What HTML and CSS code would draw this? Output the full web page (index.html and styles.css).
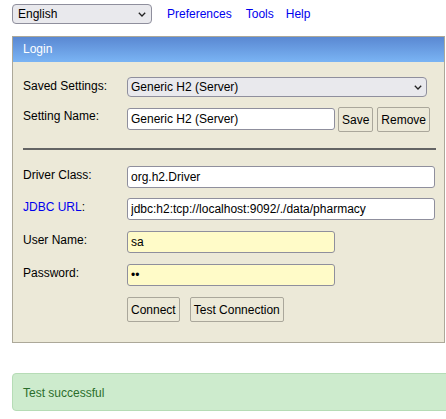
FILE: index.html
```html
<!DOCTYPE html>
<html lang="en">
<head>
<meta charset="utf-8">
<title>H2 Console</title>
<link rel="stylesheet" href="styles.css">
</head>
<body>
<div class="topbar">
  <span class="sel sel-lang">
    <select class="select select-lang"><option>English</option></select>
    <svg class="chev" width="8" height="5" viewBox="0 0 8 5"><path d="M0.8 0.8 L4 4 L7.2 0.8" fill="none" stroke="#222" stroke-width="1.3"/></svg>
  </span>
  <a class="nav-link nav-pref" href="#">Preferences</a>
  <a class="nav-link nav-tools" href="#">Tools</a>
  <a class="nav-link nav-help" href="#">Help</a>
</div>

<div class="panel">
  <div class="panel-head">Login</div>
  <div class="panel-body">
    <div class="row row-saved">
      <span class="lbl">Saved Settings:</span>
      <span class="sel sel-saved">
        <select class="select select-saved"><option>Generic H2 (Server)</option></select>
        <svg class="chev" width="8" height="5" viewBox="0 0 8 5"><path d="M0.8 0.8 L4 4 L7.2 0.8" fill="none" stroke="#222" stroke-width="1.3"/></svg>
      </span>
    </div>
    <div class="row row-name">
      <span class="lbl">Setting Name:</span>
      <div class="ctrl-line">
        <input class="field field-short field-name" type="text" value="Generic H2 (Server)">
        <button class="btn btn-save">Save</button>
        <button class="btn btn-remove">Remove</button>
      </div>
    </div>
    <div class="sep"></div>
    <div class="row row-driver">
      <span class="lbl">Driver Class:</span>
      <input class="field field-long" type="text" value="org.h2.Driver">
    </div>
    <div class="row row-url">
      <span class="lbl"><a class="help-link" href="#">JDBC URL</a>:</span>
      <input class="field field-long" type="text" value="jdbc:h2:tcp://localhost:9092/./data/pharmacy">
    </div>
    <div class="row row-user">
      <span class="lbl">User Name:</span>
      <input class="field field-short field-yellow" type="text" value="sa">
    </div>
    <div class="row row-pass">
      <span class="lbl">Password:</span>
      <input class="field field-short field-yellow" type="password" value="sa">
    </div>
    <div class="row row-actions">
      <span class="lbl"></span>
      <div class="ctrl-line actions">
        <button class="btn btn-connect">Connect</button>
        <button class="btn btn-test">Test Connection</button>
      </div>
    </div>
  </div>
</div>

<div class="alert">Test successful</div>
</body>
</html>
```
FILE: styles.css
```css
html, body {
  margin: 0;
  padding: 0;
  background: #ffffff;
  overflow: hidden;
}
body {
  font-family: "Liberation Sans", Arial, sans-serif;
  font-size: 12px;
  line-height: 14px;
  color: #000;
}

.topbar {
  display: flex;
  align-items: center;
  padding: 4px 0 0 12px;
  height: 20px;
}
.nav-link {
  color: #0000ee;
  text-decoration: none;
}
.nav-pref { margin-left: 15px; }
.nav-tools { margin-left: 14px; }
.nav-help { margin-left: 12px; }

.sel {
  position: relative;
  display: inline-block;
}
.select {
  -webkit-appearance: none;
  appearance: none;
  box-sizing: border-box;
  height: 20px;
  margin: 0;
  background: #e9e9ed;
  border: 1px solid #8f8f9d;
  border-radius: 4px;
  font-family: "Liberation Sans", Arial, sans-serif;
  font-size: 12px;
  color: #000;
  display: block;
}
.select-lang {
  width: 140px;
  padding: 0 0 0 5px;
}
.select-saved {
  width: 300px;
  padding: 0 0 0 3px;
}
.chev {
  position: absolute;
  top: 8px;
  pointer-events: none;
}
.sel-lang .chev { left: 126px; }
.sel-saved .chev { left: 287px; }

.panel {
  box-sizing: border-box;
  width: 433px;
  margin: 12px 0 0 12px;
  border: 1px solid #aca899;
  background: #ece9d8;
}
.panel-head {
  box-sizing: border-box;
  height: 25px;
  padding: 5px 10px 0;
  color: #ffffff;
  background: linear-gradient(#5a88d2, #7ab4f4);
}
.panel-body {
  padding: 15px 8px 20px 10px;
}

.row {
  display: grid;
  grid-template-columns: 104px 1fr;
  align-items: start;
}
.lbl {
  padding-top: 2px;
}
.help-link {
  color: #0000ee;
  text-decoration: none;
}
.row-name { margin-top: 10px; }
.row-url { margin-top: 10px; }
.row-user, .row-pass, .row-actions { margin-top: 11px; }

.sep {
  height: 2px;
  margin: 16px 0 16px 0;
  background: #646464;
}

.ctrl-line {
  display: flex;
  align-items: flex-start;
}

.field {
  box-sizing: border-box;
  height: 22px;
  margin: 0;
  padding: 0 3px;
  border: 1px solid #8f8f9d;
  border-radius: 3px;
  background: #ffffff;
  font-family: "Liberation Sans", Arial, sans-serif;
  font-size: 12px;
  color: #000;
  outline: none;
}
.field-long { width: 308px; }
.field-short { width: 208px; }
.field-name { margin-top: 1px; }
.field-yellow { background: #fffbc8; }

.btn {
  box-sizing: border-box;
  height: 25px;
  margin: 0;
  padding: 0 3px;
  border: 1px solid #aaa79b;
  border-radius: 2px;
  background: #ece9d8;
  font-family: "Liberation Sans", Arial, sans-serif;
  font-size: 12px;
  color: #000;
  white-space: nowrap;
}
.btn-save { margin-left: 3px; }
.btn-remove { margin-left: 4px; }
.btn-test { margin-left: 10px; }

.alert {
  box-sizing: border-box;
  width: 450px;
  height: 38px;
  margin: 30px 0 0 12px;
  padding: 12px 10px 10px;
  border: 1px solid #b6dcb6;
  border-radius: 4px;
  background: #cdebcd;
  color: #2b6e2b;
}
```
